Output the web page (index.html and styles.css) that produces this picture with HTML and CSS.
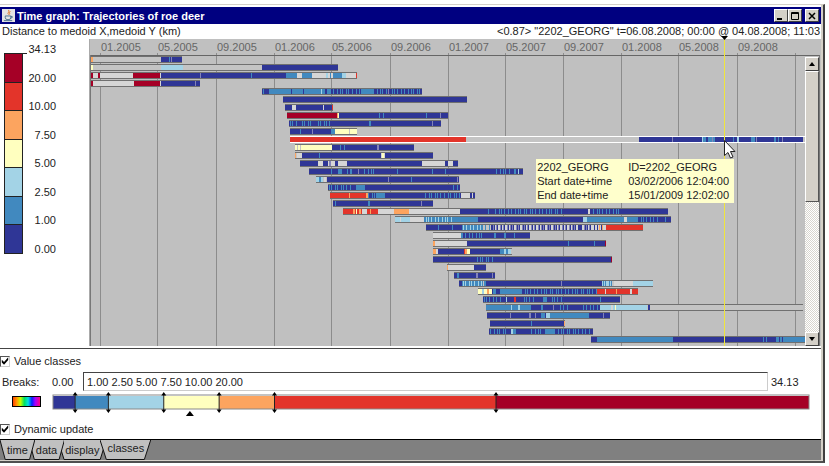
FILE: index.html
```html
<!DOCTYPE html>
<html lang="en">
<head>
<meta charset="utf-8">
<title>Time graph: Trajectories of roe deer</title>
<link rel="stylesheet" href="styles.css">
</head>
<body>
<main class="window">
  <header class="titlebar">
    <svg class="app-icon" viewBox="0 0 14 14" aria-hidden="true">
      <rect width="14" height="14" fill="#e4e4e4"/>
      <path d="M7 1c2 2-2 3 0 5M9 2.500c-2 1.500 0 2-1 3.500" fill="none" stroke="#e07020"/>
      <path d="M3.500 7.500h6v2q0 2-3 2t-3-2zM9.500 8h1.500q1 1.500-2 2M2 12.500h9" fill="none" stroke="#4a708c"/>
    </svg>
    <h1>Time graph: Trajectories of roe deer</h1>
    <div class="controls">
      <button type="button" aria-label="Minimize"><svg viewBox="0 0 10 8"><path d="M1 7h5" stroke="#000" stroke-width="2"/></svg></button>
      <button type="button" aria-label="Maximize"><svg viewBox="0 0 10 8"><path d="M1.500 .5h7v7h-7zM1 1.500h8" fill="none" stroke="#000"/></svg></button>
      <button type="button" class="close" aria-label="Close"><svg viewBox="0 0 10 8"><path d="M2 1l6 6M8 1l-6 6" stroke="#000" stroke-width="1.500"/></svg></button>
    </div>
  </header>
  <div class="info">
    <span>Distance to medoid X,medoid Y (km)</span>
    <span>&lt;0.87&gt; "2202_GEORG" t=06.08.2008; 00:00 @ 04.08.2008; 11:03</span>
  </div>
  <section class="graph">
    <div class="legend">
      <div class="scale"><i class="c7"></i><i class="c6"></i><i class="c5"></i><i class="c4"></i><i class="c3"></i><i class="c2"></i><i class="c1"></i></div>
      <div class="scale-labels"><span>34.13</span><span>20.00</span><span>10.00</span><span>7.50</span><span>5.00</span><span>2.50</span><span>1.00</span><span>0.00</span></div>
    </div>
    <div class="plot">
      <div class="chart">
        <svg id="timeline" role="img" aria-label="Trajectories over time"></svg>
        <dl class="tooltip">
          <dt>2202_GEORG</dt><dd>ID=2202_GEORG</dd>
          <dt>Start date+time</dt><dd>03/02/2006 12:04:00</dd>
          <dt>End date+time</dt><dd>15/01/2009 12:02:00</dd>
        </dl>
      </div>
      <div class="scrollbar">
        <button type="button" aria-label="Scroll up"><svg viewBox="0 0 8 4"><path d="M1 4l3-4 3 4z"/></svg></button>
        <div class="track"><div class="thumb"></div></div>
        <button type="button" aria-label="Scroll down"><svg viewBox="0 0 8 4"><path d="M1 0l3 4 3-4z"/></svg></button>
      </div>
    </div>
  </section>
  <section class="classes">
    <label class="check"><input type="checkbox" checked>Value classes</label>
    <div class="breaks">
      <label for="breaks">Breaks:</label>
      <span class="min">0.00</span>
      <input id="breaks" type="text" value="1.00 2.50 5.00 7.50 10.00 20.00">
      <span class="max">34.13</span>
    </div>
    <div class="ramp">
      <button type="button" class="spectrum" aria-label="Choose colours"></button>
      <svg id="ramp" role="img" aria-label="Class breaks"></svg>
    </div>
    <label class="check"><input type="checkbox" checked>Dynamic update</label>
  </section>
  <nav class="tabs">
    <button type="button"><svg viewBox="0 0 40 20" preserveAspectRatio="none"><path d="M0 0L6 19.500H34L40 0"/></svg><span>time</span></button>
    <button type="button"><svg viewBox="0 0 40 20" preserveAspectRatio="none"><path d="M0 0L6 19.500H34L40 0"/></svg><span>data</span></button>
    <button type="button"><svg viewBox="0 0 40 20" preserveAspectRatio="none"><path d="M0 0L5 19.500H35L40 0"/></svg><span>display</span></button>
    <button type="button" class="active"><svg viewBox="0 0 40 20" preserveAspectRatio="none"><path d="M0 0L5 19.500H35L40 0"/></svg><span>classes</span></button>
  </nav>
</main>
<script src="chart.js"></script>
</body>
</html>
```
FILE: styles.css
```css
* { box-sizing: border-box; }
body {
  margin: 0;
  background: #fff;
  color: #222;
  font: 11px/14px "Liberation Sans", Arial, sans-serif;
}
button, input { font: inherit; color: inherit; margin: 0; }
.window {
  margin: 4px 4px 2px 0;
  padding-top: 2px;
  border-top: 1px solid #d4d0c8;
  border-right: 2px solid #404040;
  border-bottom: 2px solid #505050;
  box-shadow: inset -2px 0 #d4d0c8;
}
.titlebar {
  display: flex;
  align-items: center;
  height: 17px;
  margin-right: 2px;
  padding: 0 2px;
  background: #000080;
  color: #fff;
}
.app-icon { width: 13px; height: 13px; }
h1 { flex: 1; margin: 0 0 0 2px; font-size: 11px; line-height: 14px; font-weight: bold; }
.controls { display: flex; }
.controls button, .scrollbar button {
  display: grid;
  place-items: center;
  width: 14px;
  height: 13px;
  padding: 0;
  background: #d4d0c8;
  border: 1px solid;
  border-color: #fff #404040 #404040 #fff;
}
.controls svg { width: 10px; height: 8px; }
.controls .close { margin-left: 3px; }
.info {
  display: flex;
  justify-content: space-between;
  height: 15px;
  margin-right: 3px;
  padding-left: 2px;
}
.graph { display: flex; margin-right: 2px; padding-bottom: 2px; border-bottom: 1px solid #444; }
.legend { display: flex; flex: none; width: 89px; padding-left: 4px; }
.scale {
  display: flex;
  flex-direction: column;
  width: 19px;
  height: 201px;
  margin-top: 14px;
  border: 1px solid #222;
}
.scale i { flex: 1; }
.scale i + i { border-top: 1px solid #222; }
.scale-labels {
  display: flex;
  flex-direction: column;
  justify-content: space-between;
  width: 33px;
  height: 214px;
  margin-top: 3px;
  text-align: right;
}
.scale-labels span:first-child { background: linear-gradient(#222, #222) 0 11px / 4px 1px no-repeat; }
.c1 { background: #2f3696; }
.c2 { background: #4189bf; }
.c3 { background: #a3d3e6; }
.c4 { background: #ffffbf; }
.c5 { background: #fca45f; }
.c6 { background: #e3342a; }
.c7 { background: #a50026; }
.plot { display: flex; flex: 1; background: #c0c0c0; border-left: 1px solid #aaa; }
.chart { position: relative; flex: 1; height: 307px; }
#timeline { display: block; width: 100%; height: 307px; overflow: visible; }
.tooltip {
  position: absolute;
  left: 62.4%;
  top: 120px;
  display: grid;
  grid-template-columns: 91px auto;
  margin: 0;
  padding: 1px 5px 1px 1px;
  background: #ffffcc;
}
.tooltip dd { margin: 0; }
.scrollbar {
  display: flex;
  flex-direction: column;
  width: 15px;
  margin: 16px 1px 0 0;
  padding-top: 1px;
  border-top: 1px solid #666;
  border-right: 1px solid #777;
}
.scrollbar button { width: 14px; height: 14px; }
.scrollbar svg { width: 8px; height: 4px; }
.track {
  flex: 1;
  background: repeating-conic-gradient(#fff 0 25%, #d8d5ce 0 50%) 0 0 / 2px 2px;
}
.thumb {
  height: 50%;
  background: #d4d0c8;
  border: 1px solid;
  border-color: #fff #555 #555 #fff;
}
.classes { padding: 5px 5px 3px 0; }
.check { display: flex; align-items: center; height: 14px; }
.check input {
  appearance: none;
  display: grid;
  width: 10px;
  height: 11px;
  margin-right: 4px;
  border: 1px solid;
  border-color: #555 #ccc #ccc #555;
}
.check input:checked::after {
  content: "";
  background: #000;
  clip-path: polygon(10% 35%, 38% 60%, 90% 8%, 90% 40%, 38% 92%, 10% 66%);
}
.breaks { display: flex; align-items: center; margin-top: 4px; padding-left: 2px; }
.breaks label { width: 50px; }
.min { width: 31px; }
.breaks input {
  flex: 1;
  min-width: 0;
  height: 19px;
  padding: 0 3px;
  background: #fff;
  border: 1px solid;
  border-color: #444 #ccc #ccc #444;
}
.max { width: 50px; padding-left: 3px; }
.ramp { display: flex; height: 30px; margin: 1px 9px 0 12px; }
.spectrum {
  width: 29px;
  height: 11px;
  margin: 4px 12px 0 0;
  padding: 0;
  border: 1px solid #000;
  background: linear-gradient(90deg, #ff4000, #ffa000 15%, #c0ff00 28%, #00e060 42%, #00e0e0 56%, #0020ff 70%, #a000ff 82%, #ff0080);
}
#ramp { flex: 1; height: 30px; overflow: visible; }
.tabs {
  display: flex;
  height: 22px;
  margin-right: 2px;
  background: #808080;
  border-top: 1px solid #000;
  border-bottom: 1px solid #d4d0c8;
}
.tabs button {
  position: relative;
  height: 20px;
  padding: 0 7px;
  background: none;
  border: 0;
}
.tabs button + button { margin-left: -6px; }
.tabs button:nth-child(1) { z-index: 3; }
.tabs button:nth-child(2) { z-index: 2; }
.tabs button:nth-child(3) { z-index: 1; }
.tabs .active { z-index: 4; padding-bottom: 4px; }
.tabs svg { position: absolute; inset: 0; width: 100%; height: 100%; }
.tabs path { fill: #c0c0c0; stroke: #111; vector-effect: non-scaling-stroke; }
.tabs span { position: relative; }
```
FILE: chart.js
```js
const colors = {
  b: "#2f3696", m: "#4189bf", l: "#a3d3e6", y: "#ffffbf", p: "#fca45f",
  r: "#e3342a", c: "#a50026", w: "#d6d6d6", v: "#8484b8", g: "#c4c4c4"
};
const NS = "http://www.w3.org/2000/svg";
const X0 = 90, SPAN = 715;
const pct = (x) => ((x - X0) / SPAN * 100).toFixed(3) + "%";
const len = (w) => (w / SPAN * 100).toFixed(3) + "%";
function add(parent, name, attrs, text) {
  const el = document.createElementNS(NS, name);
  for (const key in attrs) el.setAttribute(key, attrs[key]);
  if (text) el.textContent = text;
  parent.appendChild(el);
  return el;
}

// Each row: start, end, then "<colour><from>-<to>" runs; "*" spreads thin stripes over a run.
const rows = [
  "91 182 p91-93 b161-182 m169-170 v171-172",
  "91 338 y91-93 l161-183 b262-338",
  "91 357 c91-93 w93-98 c98-100 w100-133 c133-160 w160-161 b161-286 v200-201 m251-252 m286-297 w297-302 m302-312 w312-326 l326-328 w328-330 m330-331 w331-333 m333-342 l342-346 w346-356 r356-357",
  "91 200 c91-93 w93-134 c134-160 w160-161 b161-200 v195-196",
  "262 422 b262-422 m263-264 m269-325 b291-292 b303-304 l321-322 m327-331 *m333-352 m362-373 *m352-362 *m373-402 *m404-420 v388-389",
  "283 467 b283-467",
  "285 333 b285-332 w292-296 w323-324 r332-333",
  "287 448 c287-337 p337-338 y338-339 b339-448 m379-380 m383-384 m426-427 v440-441",
  "289 441 b289-441 *m290-298 *m302-312 *m318-331 m369-371 v432-433",
  "290 357 b290-331 m300-301 v312-313 m331-335 y335-357 g349-350",
  "290 805 r290-466 b639-803 v672-673 l702-703 m703-706 m708-715 v712-713 m733-734 l737-739 m751-755 v756-757 m774-776 m778-779 v782-783",
  "295 414 y295-332 g297-298 g300-301 b332-414 m340-341 m344-345 v377-379",
  "295 433 p295-296 w297-302 b302-433 m319-320 w381-385 y382-384",
  "300 458 b300-318 w318-323 b323-328 w328-347 v329-331 b335-338 b347-422 w422-445 b445-448 w448-453 b453-458",
  "309 523 b309-523 m331-332 m338-342 m347-348 m350-352 v358-359 *m364-375 m397-398 m432-433 m445-446 *m496-510 m514-516 l518-519",
  "316 459 l316-319 m319-321 l321-323 w324-326 b327-459 v388-389 m411-412 v457-458",
  "328 460 b328-460 *m329-352 m356-365 m453-454 m457-458",
  "330 475 r330-366 p349-350 p366-368 b368-461 *m368-376 m376-385 *m425-442 *m444-461 w461-470 b470-475 w472-473",
  "333 433 b333-433 m335-336 m368-370 v421-422",
  "343 668 r343-378 p353-355 y356-357 p359-361 w362-367 p370-371 w378-394 p394-409 w409-460 b460-668 m488-489 *m495-562 w588-590 *m593-620",
  "395 671 l395-410 w400-401 w410-424 m424-478 *l426-452 b478-671 l583-587 m587-640 w624-627 b638-640 *m641-660 m665-666",
  "426 643 b426-462 m438-439 m452-453 m462-482 *l463-482 *m482-493 b491-493 w493-606 *b494-604 *v493-590 b578-582 *p599-606 r606-643",
  "433 530 w433-461 b461-530 m461-463 *m465-484 m494-496 m504-506 m514-515",
  "433 606 p433-435 w435-467 b467-606 m568-569 m594-595 c605-606",
  "433 512 p433-436 w436-438 b438-464 r464-465 p465-467 y467-470 b470-500 m500-504 l504-506 m506-508 l508-511",
  "433 612 b433-612 *m477-494 c611-612",
  "447 486 p447-448 w448-474 b474-486",
  "454 495 b454-495 m457-459 v476-478 v492-493",
  "459 653 b459-462 m462-483 *l463-482 m484-486 b486-602 v561-562 l602-612 *m603-614 w614-633 l633-653",
  "478 638 y478-482 l482-484 y484-492 p487-489 b492-597 m493-496 m500-521 *m521-597 r597-638 w605-606 p616-617 w630-632",
  "483 620 b483-620 *m484-503 l506-507 r514-516 *m524-534 m543-547 *m552-564 m600-601",
  "486 803 m486-531 l511-512 l518-520 b531-600 m541-543 v553-554 *m560-570 *m583-600 l600-647 w611-613 y615-616 b648-650",
  "487 610 b487-610 v510-511 v529-531 v535-536 m541-545 l546-550 m550-589 v603-604",
  "490 565 b490-564 m531-532 p564-565",
  "489 593 b489-593 *m490-508 l511-513 m513-516 *m531-541 m545-554 *m554-590",
  "591 805 b591-597 m597-673 b673-783 m763-764 m766-767 m776-779 m780-782 m783-805"
];

const timeline = document.getElementById("timeline");
const ticks = [["01.2005", 100], ["05.2005", 157], ["09.2005", 216], ["01.2006", 274],
  ["05.2006", 331], ["09.2006", 390], ["01.2007", 448], ["05.2007", 505], ["09.2007", 563],
  ["01.2008", 621], ["05.2008", 678], ["09.2008", 737], ["", 795]];
const box = (x, y, w, h, fill) => add(timeline, "rect",
  { x: pct(x), y, width: len(w), height: h, fill, "shape-rendering": "crispEdges" });

for (const [label, x] of ticks) {
  box(x, 14, 1, 293, "#8c8c8c");
  add(timeline, "text", { x: pct(x + 1), y: 12, fill: "#666" }, label);
}
box(90, 16, 715, 1, "#666");
box(90, 16, 1, 291, "#777");

rows.forEach((row, i) => {
  const [start, end, ...runs] = row.split(" ");
  const y = 18 + i * 8;
  const picked = i === 10;
  const w = end - start;
  const edge = picked ? "#fff" : "#707070";
  box(+start, y, w, 6, "#c4c4c4");
  runs.forEach((run) => {
    const striped = run[0] === "*";
    const code = striped ? run.slice(1) : run;
    const [from, to] = code.slice(1).split("-").map(Number);
    if (!striped) {
      box(from, y, to - from, 6, colors[code[0]]);
      return;
    }
    let x = from;
    for (let n = i; x < to; n++) {
      box(x, y, 1, 6, colors[code[0]]);
      x += 2 + (n * 7 % 5 > 2 ? 2 : n % 2);
    }
  });
  box(+start, y - 1, w, 1, edge);
  box(+start, y + 5, w, 1, edge);
});

box(724, 0, 1, 307, "#f0e63c");
const marker = add(timeline, "svg", { x: pct(724), y: -3, overflow: "visible" });
add(marker, "path", { d: "M-3 0H4L.5 4z" });
const pointer = add(timeline, "svg", { x: pct(724), y: 101, overflow: "visible" });
add(pointer, "path", { d: "M.5 .5V15.500L4 12.500L6.500 18L9 17L6.500 11.500H11z", fill: "#fff", stroke: "#222" });

// Class ramp, proportional to the value range.
const ramp = document.getElementById("ramp");
const stops = [0, 1, 2.5, 5, 7.5, 10, 20, 34.13];
const at = (v) => (v / 34.13 * 100).toFixed(3) + "%";
stops.slice(1).forEach((v, i) => add(ramp, "rect", {
  x: at(stops[i]), y: 4, width: at(v - stops[i]), height: 13, fill: colors["bmlyprc"[i]]
}));
add(ramp, "rect", { x: 0, y: 3, width: "100%", height: 14, fill: "none", stroke: "#888" });
stops.slice(1, -1).forEach((v) => {
  const g = add(ramp, "svg", { x: at(v), y: 0, overflow: "visible" });
  add(g, "path", { d: "M0 3V18", stroke: "#222" });
  add(g, "path", { d: "M0 0L2.500 3.500H-2.500zM0 21L2.500 17.500H-2.500z" });
});
const mean = add(ramp, "svg", { x: at(6.18), y: 19, overflow: "visible" });
add(mean, "path", { d: "M0 0L4 5H-4z" });
```
